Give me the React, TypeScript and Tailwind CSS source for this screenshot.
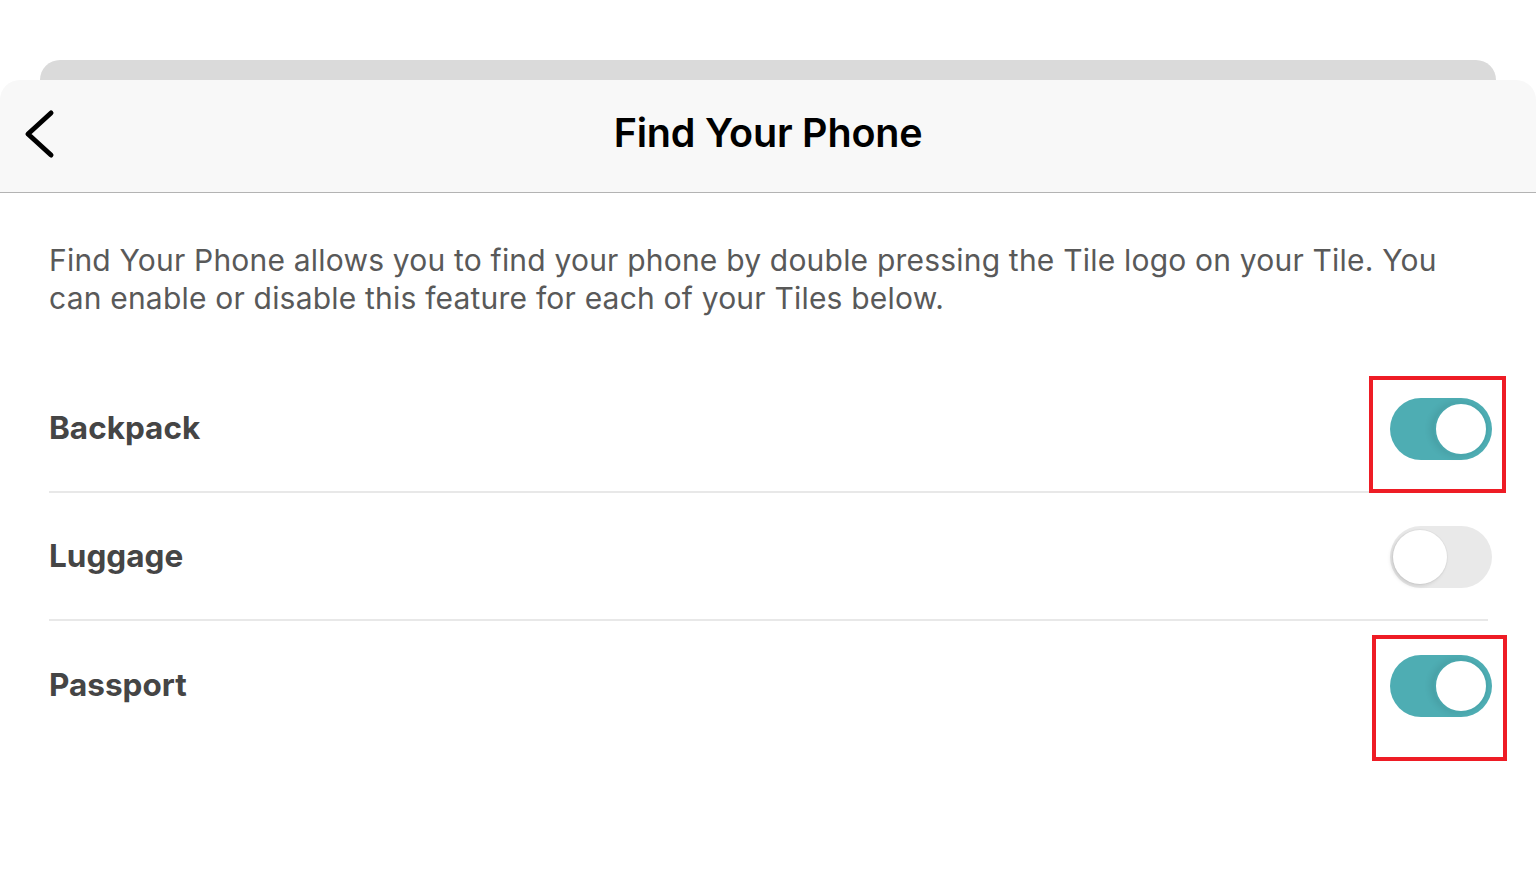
import { useState } from 'react'

const tiles = [
  { name: 'Backpack', on: true, mark: 'top-[-22px] left-[-21px] h-[117px] w-[137px]' },
  { name: 'Luggage', on: false, mark: '' },
  { name: 'Passport', on: true, mark: 'top-[-20px] left-[-18px] h-[126px] w-[135px]' },
]

function Toggle({ on, onChange }: { on: boolean; onChange: () => void }) {
  return (
    <button
      type="button"
      onClick={onChange}
      className={`relative h-[62px] w-[102px] shrink-0 rounded-full transition-colors ${
        on ? 'bg-[#4eadb3]' : 'bg-[#e9e9e9]'
      }`}
    >
      <span
        className={`absolute top-[4px] h-[54px] w-[54px] rounded-full bg-white transition-all ${
          on
            ? 'left-[44px] border-[2px] border-[#4aa7ad] shadow-[-4px_0_6px_rgba(0,0,0,0.08)]'
            : 'left-[3px] shadow-[-2px_2px_4px_rgba(0,0,0,0.12),0_0_0_1px_rgba(0,0,0,0.03)]'
        }`}
      />
    </button>
  )
}

export default function App() {
  const [states, setStates] = useState(tiles.map(t => t.on))

  return (
    <div className="min-h-screen bg-white font-['Inter',sans-serif]">
      <div className="h-[60px]" />
      <div className="mx-[40px] h-[20px] rounded-t-[20px] bg-[#dadada]" />
      <div className="rounded-t-[20px] bg-white">
        <header className="relative flex h-[113px] items-center justify-center rounded-t-[20px] border-b border-[#b3b3b3] bg-[#f8f8f8]">
          <button type="button" className="absolute left-[24px] top-[28px]" aria-label="Back">
            <svg width="36" height="52" viewBox="0 0 36 52" fill="none">
              <path d="M27 5L4 26l23 21" stroke="#000" strokeWidth="5" strokeLinecap="round" strokeLinejoin="round" />
            </svg>
          </button>
          <h1 className="-mt-[4px] text-[39.5px] font-semibold tracking-[-0.2px] text-black">Find Your Phone</h1>
        </header>

        <div className="pl-[49px] pr-[40px] pt-[48px]">
          <p className="text-[30px] leading-[38px] tracking-[0.2px] text-[#595959]">
            Find Your Phone allows you to find your phone by double pressing the Tile logo on your Tile. You can enable or
            disable this feature for each of your Tiles below.
          </p>
        </div>

        <div className="mt-[48px] pl-[49px] pr-[48px]">
          {tiles.map((tile, i) => (
            <div
              key={tile.name}
              className={`flex h-[128px] items-center justify-between ${
                i < tiles.length - 1 ? 'border-b-2 border-[#e8e8e8]' : ''
              }`}
            >
              <span className="text-[31.5px] font-bold text-[#454545]">{tile.name}</span>
              <div className="relative mr-[-4px] mt-[8px]">
                <Toggle
                  on={states[i]}
                  onChange={() => setStates(s => s.map((v, j) => (j === i ? !v : v)))}
                />
                {tile.mark && (
                  <div className={`pointer-events-none absolute border-[4px] border-[#ee1c25] ${tile.mark}`} />
                )}
              </div>
            </div>
          ))}
        </div>
      </div>
    </div>
  )
}
